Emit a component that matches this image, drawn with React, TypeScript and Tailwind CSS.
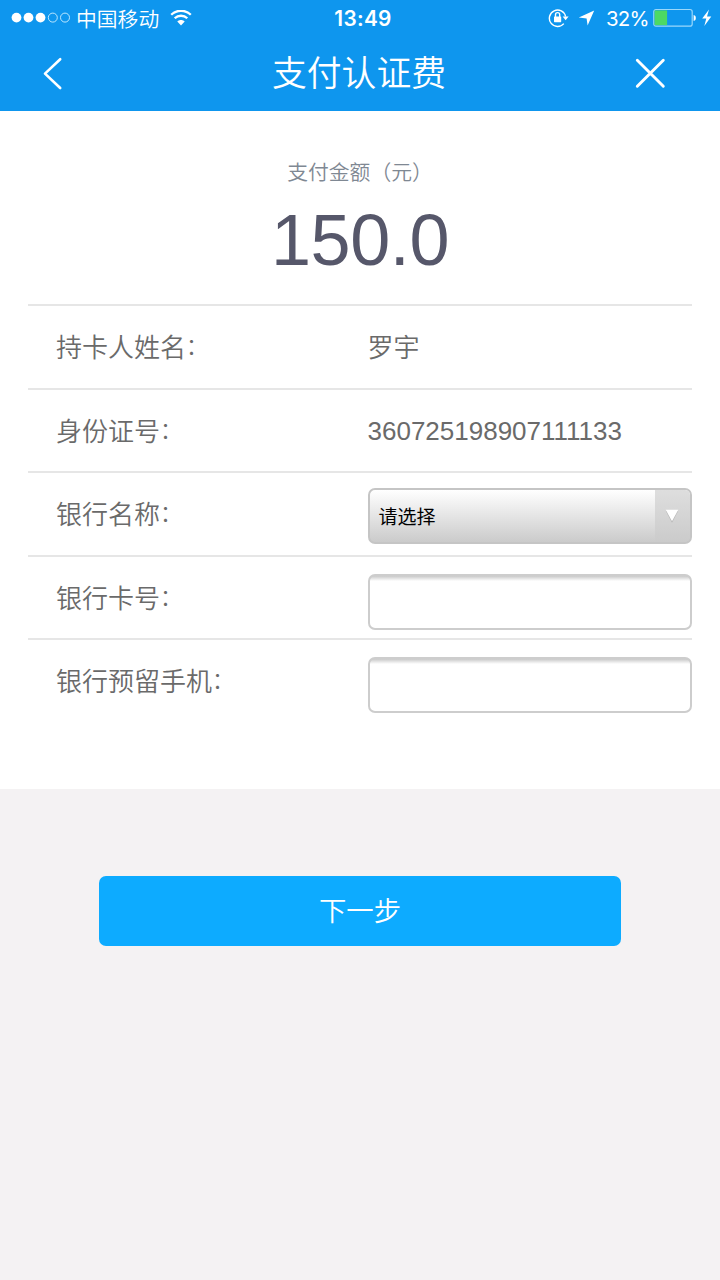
import type { ReactNode } from "react";

function StatusBar() {
  return (
    <div className="flex h-9 items-center text-white">
      <div className="flex w-[240px] items-center pl-[11px]">
        <svg className="h-[12px] w-[60px] shrink-0" viewBox="0 0 60 12">
          {[5.5, 17.5, 29.5].map((x) => (
            <circle key={x} cx={x} cy="5.6" r="4.9" fill="#fff" />
          ))}
          {[41.8, 54].map((x) => (
            <circle key={x} cx={x} cy="5.6" r="4.5" fill="none" stroke="#cdeeff" strokeWidth="0.9" />
          ))}
        </svg>
        <span className="ml-[5px] text-[20.8px] leading-9 whitespace-nowrap">中国移动</span>
        <svg className="ml-[11px] h-[17px] w-[22px] shrink-0" viewBox="0 0 22 17" fill="none" stroke="#fff" strokeWidth="2.3">
          <path d="M1.2 4.8C6.6-.6 15.4-.6 20.8 4.8" />
          <path d="M4.7 8.3c3.5-3.4 9.1-3.4 12.6 0" />
          <path d="M7.3 11.6c2-2 5.4-2 7.4 0L11 15.4z" fill="#fff" stroke="none" />
        </svg>
      </div>
      <div className="w-[246px] pt-[2px] text-center font-['Inter','Liberation_Sans',sans-serif] text-[20.8px] font-semibold leading-[34px] tracking-[0.3px]">
        13:49
      </div>
      <div className="flex flex-1 items-center">
        <svg className="ml-[62px] h-[20px] w-[22px] shrink-0" viewBox="0 0 22 20" fill="none" stroke="#fff" strokeWidth="1.4">
          <path d="M15.8 15.6A8.2 8.2 0 1 1 17.6 8.6" />
          <path d="M14.6 8.6h6l-3 3.6z" fill="#fff" stroke="none" />
          <rect x="6" y="8.4" width="7.2" height="5.8" rx="0.6" fill="#fff" stroke="none" />
          <path d="M7.5 9V6.7a2.1 2.1 0 0 1 4.2 0V9" />
        </svg>
        <svg className="ml-[8px] h-[16px] w-[17px] shrink-0" viewBox="0 0 17 16" fill="#fff">
          <path d="M16.2.4 9.6 15.4 8.6 8.4.8 7.4z" />
        </svg>
        <span className="ml-[11px] w-[47px] pt-[2px] font-['Inter','Liberation_Sans',sans-serif] text-[20.4px] font-normal leading-[34px] tracking-[-0.8px]">32%</span>
        <svg className="h-[20px] w-[60px] shrink-0" viewBox="0 0 60 20">
          <rect x="0.8" y="1.5" width="38.4" height="16.6" rx="2.2" fill="none" stroke="#9ad8fb" strokeWidth="1.2" />
          <path d="M1.6 2.4h12.5v14.8H1.6z" fill="#4cd964" />
          <path d="M40.6 7c1.8.3 2.2 1.5 2.2 3s-.4 2.7-2.2 3z" fill="#fff" />
          <path d="M56 1.6 49.2 10.6h4.1l-2 7.4 7-9.4H54z" fill="#fff" />
        </svg>
      </div>
    </div>
  );
}

function Header() {
  return (
    <header className="h-[111px] bg-[#0e96ee]">
      <StatusBar />
      <div className="flex h-[74px] items-center justify-between pl-[42px] pr-[54px] text-white">
        <svg className="h-[34px] w-[21px]" viewBox="0 0 21 34" fill="none" stroke="#fff" strokeWidth="2.6" strokeLinecap="round" strokeLinejoin="round">
          <path d="M18.2 3.2 3 17.6l15.2 14.4" />
        </svg>
        <h1 className="ml-[21px] pb-[5px] text-[34.8px] font-[350] leading-[68px]">支付认证费</h1>
        <svg className="h-[32px] w-[32px]" viewBox="0 0 32 32" fill="none" stroke="#fff" strokeWidth="2.9" strokeLinecap="round">
          <path d="M3.3 3.2 29.3 29.2M29.3 3.2 3.3 29.2" />
        </svg>
      </div>
    </header>
  );
}

function Row({ label, children }: { label: string; children: ReactNode }) {
  return (
    <div className="flex h-[83.5px] border-t-2 border-[#e6e6e6] text-[#6a6a6a]">
      <div className="w-[339.5px] shrink-0 pl-7 text-[26px] leading-[80px]">
        {label}
        <span className="align-[3px] text-[22px] leading-none">：</span>
      </div>
      {children}
    </div>
  );
}

function TextField({ name }: { name: string }) {
  return (
    <input
      aria-label={name}
      className="mt-[17px] h-[56px] w-full rounded-[7px] border-2 border-[#cdcdcd] bg-[linear-gradient(#c9c9c9,#fff_5px)] px-2 outline-none"
    />
  );
}

export default function App() {
  return (
    <div className="h-[1280px] w-[720px] overflow-hidden bg-[#f4f2f3] font-['Noto_Sans_CJK_SC',sans-serif] font-[350]">
      <Header />
      <main className="h-[678px] bg-white px-7">
        <div className="flex h-[193px] flex-col items-center pt-[40px]">
          <p className="text-[20.8px] leading-10 text-[#7f8893]">支付金额（元）</p>
          <p className="mt-[9px] font-['Liberation_Sans',sans-serif] text-[72px] font-normal leading-[80px] tracking-[-0.4px] text-[#56576a]">150.0</p>
        </div>
        <Row label="持卡人姓名">
          <span className="text-[26px] leading-[80px]">罗宇</span>
        </Row>
        <Row label="身份证号">
          <span className="font-['Liberation_Sans',sans-serif] text-[26px] font-normal leading-[83px]">360725198907111133</span>
        </Row>
        <Row label="银行名称">
          <button className="mt-[15px] flex h-[56px] w-full overflow-hidden rounded-[7px] border-2 border-[#c5c5c5] bg-linear-to-b from-white to-[#cbcbcb] text-left">
            <span className="flex-1 pl-[9px] text-[19px] font-normal leading-[52px] text-black">请选择</span>
            <span className="flex h-full w-[35px] items-center justify-center bg-linear-to-b from-[#dedede] to-[#cbcbcb] pr-[2px]">
              <svg className="h-[14px] w-[14px]" viewBox="0 0 14 14">
                <path d="M.7 1.7h12.6L7 13.7z" fill="#b5b5b5" />
                <path d="M.7.7h12.6L7 12.3z" fill="#fff" />
              </svg>
            </span>
          </button>
        </Row>
        <Row label="银行卡号">
          <TextField name="银行卡号" />
        </Row>
        <Row label="银行预留手机">
          <TextField name="银行预留手机" />
        </Row>
      </main>
      <div className="pt-[87px] pl-[99px]">
        <button className="h-[70px] w-[522px] rounded-[7px] bg-[#0dabff] pb-[4px] text-[27.4px] font-[350] leading-[64px] text-white">
          下一步
        </button>
      </div>
    </div>
  );
}
